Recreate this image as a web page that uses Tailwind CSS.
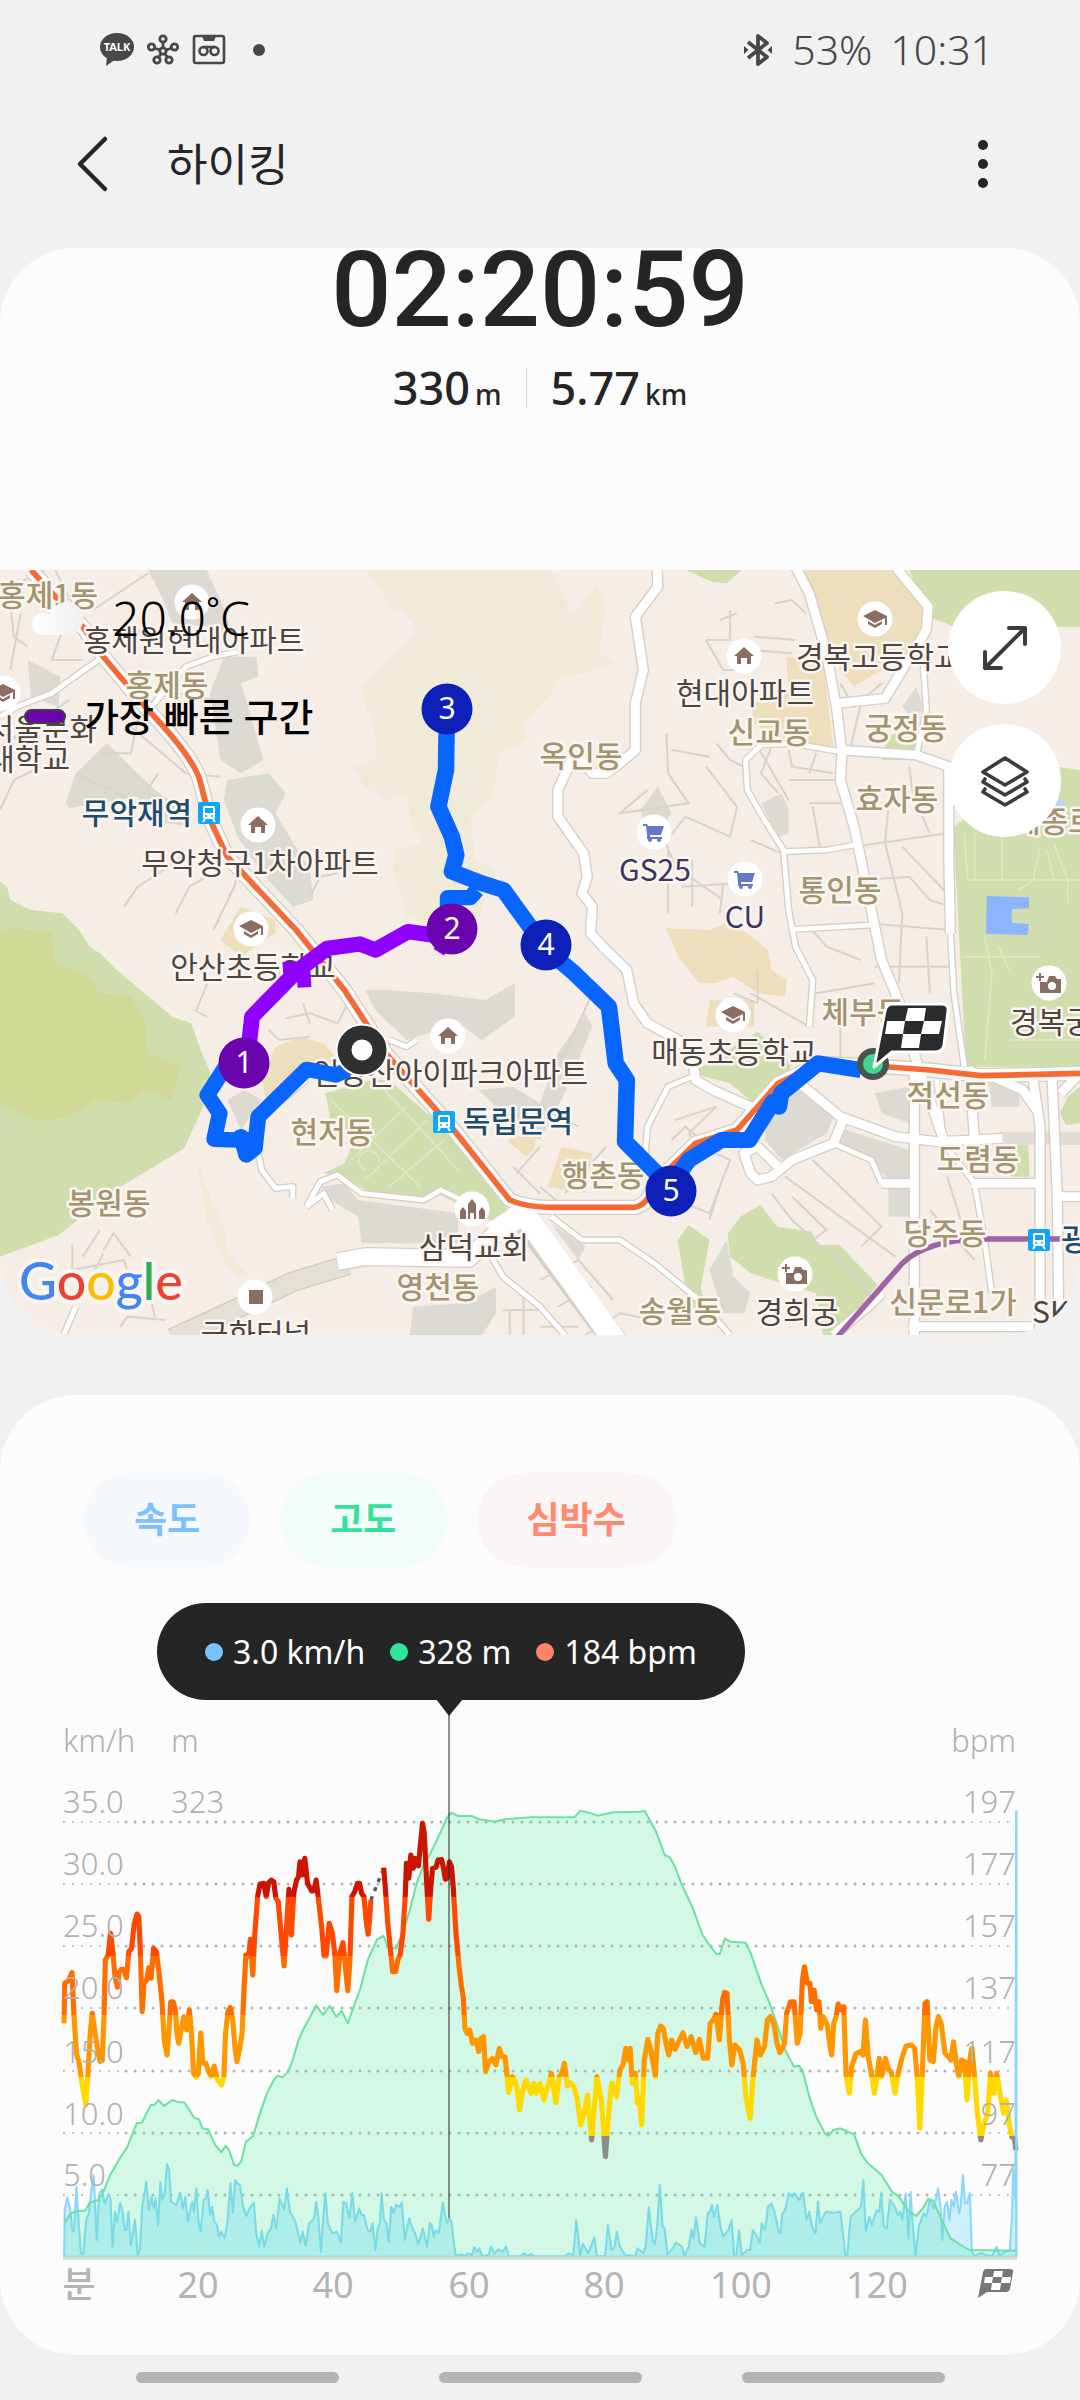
<!DOCTYPE html>
<html lang="ko">
<head>
    <meta charset="utf-8">
    <meta name="viewport" content="width=device-width, initial-scale=1.0">
    <title>하이킹</title>
    <script src="https://cdn.jsdelivr.net/npm/@tailwindcss/browser@4"></script>
</head>
<body class="bg-[#f1f1f1] text-[#252525] font-['Noto_Sans','Noto_Sans_CJK_KR',sans-serif]">

    <!-- status bar -->
    <div class="flex items-center justify-between h-[100px] pl-[99px] pr-[86px] text-[#484848]">
        <div class="flex items-center">
            <svg class="w-[36px] h-[36px]" viewBox="0 0 36 36">
                <ellipse cx="18" cy="15" rx="17" ry="14" fill="#484848"/>
                <path d="M8 25 L7 34 L17 27z" fill="#484848"/>
                <text x="18" y="19" text-anchor="middle" class="fill-white text-[11px] font-bold">TALK</text>
            </svg>
            <svg class="w-[32px] h-[32px] ml-[12px]" viewBox="0 0 32 32" fill="none" stroke="#484848" stroke-width="2.8">
                <path d="M16 9v5M7 14l6 2M25 14l-6 2M11 24l3-4M21 24l-3-4"/>
                <circle cx="16" cy="5" r="3.2"/><circle cx="4.500" cy="13" r="3.2"/><circle cx="27.500" cy="13" r="3.2"/>
                <circle cx="10" cy="26" r="3.2"/><circle cx="22" cy="26" r="3.2"/><circle cx="16" cy="17" r="3.2"/>
            </svg>
            <svg class="w-[34px] h-[32px] ml-[13px]" viewBox="0 0 34 32" fill="none" stroke="#484848" stroke-width="2.6">
                <rect x="2" y="2" width="30" height="27" rx="2"/>
                <path d="M10 2h14l-2 5H12z" fill="#484848" stroke="none"/>
                <circle cx="11.500" cy="17" r="4"/><circle cx="22.500" cy="17" r="4"/>
                <path d="M11 13h12"/>
            </svg>
            <span class="size-[12px] ml-[27px] rounded-full bg-[#484848]"></span>
        </div>
        <div class="flex items-center text-[41px] font-light">
            <svg class="w-[28px] h-[34px] mr-[20px]" viewBox="0 0 28 34" fill="none" stroke="#484848" stroke-width="3.8" stroke-linejoin="round">
                <path d="M4 9 L23 24 L14 31 V3 L23 10 L4 25"/>
                <path d="M0 13l4.500 4l-4.500 4zM28 13l-4.500 4l4.500 4z" fill="#484848" stroke="none"/>
            </svg>
            <span class="mr-[18px]">53%</span>
            <span>10:31</span>
        </div>
    </div>

    <!-- title bar -->
    <header class="flex items-center h-[148px] pl-[74px] pr-[77px] pb-[20px]">
        <button aria-label="뒤로" class="w-[36px]">
            <svg class="w-[36px] h-[58px]" viewBox="0 0 36 58" fill="none" stroke="#252525" stroke-width="4.5" stroke-linecap="round" stroke-linejoin="round"><path d="M31 4 L6 29 L31 54"/></svg>
        </button>
        <h1 class="ml-[57px] text-[44px] leading-none">하이킹</h1>
        <button aria-label="더보기" class="ml-auto flex flex-col items-center gap-[9px] w-[40px]">
            <span class="size-[10px] rounded-full bg-[#252525]"></span>
            <span class="size-[10px] rounded-full bg-[#252525]"></span>
            <span class="size-[10px] rounded-full bg-[#252525]"></span>
        </button>
    </header>

    <!-- summary + map -->
    <section class="bg-[#fcfcfc] rounded-[75px] overflow-hidden">
        <div class="h-[322px]">
            <div class="flex justify-center h-[84px] items-center font-['Roboto',sans-serif] font-medium text-[106px] leading-[72px]">02:20:59</div>
            <div class="flex justify-center items-center h-[112px]">
                <div class="text-[45px] font-medium">330<span class="text-[28px] ml-[5px]">m</span></div>
                <div class="w-px h-[42px] mx-[24px] bg-[#dcdcdc]"></div>
                <div class="text-[45px] font-medium">5.77<span class="text-[28px] ml-[5px]">km</span></div>
            </div>
        </div>

        <div class="relative">
            <svg class="block w-full" viewBox="0 0 1080 765">
                <!-- land, roads and route -->
                <svg x="0" y="0" width="1080" height="765" viewBox="0 30 3136 2295" preserveAspectRatio="none" fill="none">
                    <rect y="30" width="3136" height="2295" fill="#f6ede7"/>
                    <g fill="#efebd8">
                        <path d="M1060 30 1110 90 1120 140 1175 160 1210 210 1170 260 1110 310 1045 385 1060 430 1090 520 1095 590 1025 625 1060 680 1120 720 1185 710 1190 790 1225 850 1145 870 1140 940 1160 990 1180 1070 1240 1090 1390 1080 1440 930 1380 900 1365 780 1430 710 1450 580 1530 540 1520 490 1600 400 1620 355 1700 340 1790 310 1740 280 1760 140 1730 75 1680 150 1655 150 1600 30z"/>
                        <path d="M572 1820 600 1980 640 2080 660 2120 690 2150 725 2150 690 2110 655 2050 650 1985 620 1940 580 1820z"/>
                    </g>
                    <g fill="#cfdeac">
                        <path d="M0 965 20 980 30 1020 90 1050 180 1060 230 1110 260 1160 290 1180 350 1240 500 1370 555 1390 590 1490 612 1540 590 1640 535 1765 350 1880 170 2025 0 2090z"/>
                        <path d="M1993 30H2153L2110 70 2065 65z"/>
                        <path d="M2640 30H3136V200H2770L2700 170z"/>
                        <path d="M2768 800 3000 640 3070 620 3136 630V1520H2805z"/>
                        <path d="M945 1600 1080 1560 1130 1560 1240 1660 1330 1730 1475 1950 1440 1990 1270 1900 1220 1920 1070 1895 1000 1850 940 1840 1000 1810 1030 1740 960 1680z"/>
                        <path d="M2113 2020 2150 1970 2208 1935 2258 2000 2358 2015 2373 2055 2438 2055 2548 2175 2428 2325H2390L2370 2200 2270 2170 2180 2140 2120 2090z"/>
                        <path d="M1968 2040 2000 1995 2060 2040 2035 2180 2050 2260 2000 2240z"/>
                        <path d="M2010 1540 2200 1415 2300 1510 2260 1600 2200 1640 2120 1570z"/>
                        <path d="M3136 1580 3100 1610 3078 1660 3095 1695 3136 1690zM2890 1750H2985L2990 1850H2940L2890 1800zM2580 530 2640 500 2680 600 2560 600z"/>
                    </g>
                    <path d="M0 1120 40 1105 150 1120 160 1210 250 1245 290 1300 380 1310 420 1380 430 1480 525 1520 495 1620 420 1590 370 1630 280 1620 200 1670 110 1685 0 1630z" fill="#d0d996"/>
                    <g fill="#eedfbc">
                        <path d="M2338 30H2590L2690 150 2680 240 2590 310 2480 380 2440 330 2400 240z"/>
                        <path d="M2283 290 2390 310 2420 560 2360 555 2280 550 2190 490 2180 430 2290 400z"/>
                        <path d="M1933 1105 2060 1110 2110 1090 2170 1120 2230 1170 2240 1230 2285 1260 2280 1310 2200 1300 2130 1250 2080 1270 2030 1270 1970 1190z"/>
                        <path d="M640 1140 700 1040 800 1080 800 1120 700 1190zM760 1560 800 1460 870 1430 940 1450 980 1500 970 1530 890 1530 780 1650zM2060 1320H2190V1400H2050zM1630 1760 1720 1780 1700 1900 1590 1880zM1470 1740 1560 1710 1550 1770 1530 1790z"/>
                    </g>
                    <g fill="#dddad4">
                        <path d="M430 30H600L640 120 680 230 620 200 500 190 470 110z"/>
                        <path d="M650 290H745L750 350 700 370 765 600 700 640 640 600 610 400z"/>
                        <path d="M660 660 780 640 830 700 800 760 900 930 910 1020 850 1040 760 940 690 830 650 720z"/>
                        <path d="M190 730 220 640 310 550 450 690 520 740 560 800 480 790 400 710 200 745zM80 300 175 350 170 440 90 410z"/>
                        <path d="M1060 1290 1120 1290 1260 1300 1410 1320 1495 1270 1495 1370 1400 1440 1330 1390 1180 1440 1090 1350z"/>
                        <path d="M1390 1590 1490 1580 1568 1630 1620 1480 1700 1360 1720 1400 1640 1600 1568 1740 1500 1700z"/>
                        <path d="M930 1880 1000 1870 1040 1920 1330 1960V2050H1050L1040 1970 960 1920z"/>
                        <path d="M1200 2240 1350 2230 1440 2180V2260L1400 2325H1190zM660 1620 710 1590 760 1620 700 1710z"/>
                        <path d="M2228 1680 2300 1580 2430 1650 2400 1720 2270 1800 2220 1740z"/>
                        <path d="M2430 1700 2640 1770V1860L2580 1860 2520 1790 2440 1760zM2540 1600 2640 1580V1690L2560 1660z"/>
                        <path d="M2060 2130 2110 2040 2130 2150 2180 2200 2160 2260 2100 2260zM2580 1880H2640V1970H2580zM1600 1990 1700 2060 1680 2100z"/>
                        <path d="M2210 730 2270 700 2290 750V820L2260 830zM1860 750 1910 680 1950 760 1930 790 1870 790zM2620 440 2660 380 2680 440 2660 490zM2870 1570H2960V1640H2880z"/>
                    </g>
                    <path d="M2865 1008 2988 1012V1045L2938 1048V1088L2988 1092 2984 1125 2863 1122z" fill="#8db5ff"/>
                    <path d="M3020 800 3060 720H3088L3100 790z" fill="#bcd4ff"/>

                    <g stroke="#d9d3ca" stroke-width="6">
                        <path d="M130 30 70 60 30 130 40 230 80 260M160 30 210 130 150 300 240 300M30 330 60 160M270 150 400 60 430 40M290 290 380 200 420 230M0 560 60 520 200 420M0 750 40 660 120 620M300 580 380 580 400 480M220 640 400 730 460 640M380 500 540 640 640 650M520 400 620 420 640 500"/>
                        <path d="M360 1040 400 980 490 920 540 880M510 1060 550 980 600 950M620 1110 680 980 700 900M900 1010 930 950 980 940M570 1350 610 1250M565 1350 600 1370M780 1410 810 1440 900 1430M830 1375 900 1360 980 1390 1010 1330M880 1330 900 1390"/>
                        <path d="M240 2090 290 2010M300 2070 330 2020 380 2090M210 2050V2130L360 2100 380 2170M300 2080 260 2160M350 2300 370 2270 480 2280M430 2180 450 2270"/>
                        <path d="M2050 240 2100 330 2180 330M2050 240 2120 240 2120 150M2180 270 2300 280M2190 230 2310 240M2090 180 2140 160M2250 130 2300 120 2340 160M2440 370 2480 440 2560 370M2500 430 2470 560"/>
                        <path d="M1935 520 1940 640 2000 730 1930 740 1800 760 1880 690M1950 570 2060 590M2050 620 2140 740 2120 830 1990 770 1930 850M2080 550 2120 600 2160 620M1930 840 1960 920 2100 1020M1940 870V1060M2010 900V1040M1980 980 2140 970M2100 970 2090 1060M2180 840 2270 880M2200 560 2290 720M2240 560 2210 640 2260 700"/>
                        <path d="M2290 570 2300 620 2420 640M2370 580 2350 640M2290 660H2440M2350 730H2470M2360 740 2380 860M2580 740 2570 850 2620 1060 2610 1270M2640 620 2650 700 2700 820M2480 860 2750 820M2500 960 2640 950 2700 1020 2760 1040M2620 860 2750 1000M2520 1090 2760 1110M2540 1220H2760M2690 1130 2700 1300M2350 1100 2400 1160 2500 1200M2370 1300 2540 1270"/>
                        <path d="M1568 1540 1640 1480 1720 1300M1568 1640 1680 1700M1568 1880 1660 1960M1640 1900 1760 1760M1960 1680 2080 1640 2000 1720 2040 1780M1950 1740 1990 1700 2060 1760M2080 1780 2120 1800 2060 1960 1990 1930M2130 1300 2200 1330V1230M2180 1300 2350 1400M2440 1400V1520M2240 1900 2300 1980 2450 2120 2540 2220M2280 1850 2600 2090M2300 1910 2400 2010 2360 2040M2360 1800 2560 2000 2500 2060M2540 1360 2620 1450M2100 1850 2060 1980"/>
                        <path d="M1568 2160 1680 2100 1780 2220M1620 2240 1720 2180M1700 2325 1800 2260 1900 2280M1568 2300H1680M1480 2250V2325M1460 2250H1568M1520 2200V2325M1500 1840 1568 1760M1490 1820 1568 1900M1240 1690V1760M2750 1850 2790 1980 2830 2000M2700 1950 2830 2100"/>
                    </g>
                    <g stroke="#dfe8c6" stroke-width="5">
                        <path d="M960 1620 1220 1880M1100 1570 1330 1830M1180 1640 1020 1800M1290 1740 1130 1880M1000 1750 1100 1720M1060 1830a30 30 0 1 1 40 -20M1240 1680 1060 1860"/>
                        <path d="M2800 820 2810 960 3136 960M2830 820V960M2910 960V820M2960 990 3000 960 3020 860M3060 850 3100 960V1030M2800 1190H3020M2860 1130 2880 1240 2860 1500M2900 1160 2930 1230M3060 960 3040 870M2930 1400H3136M2930 1440H3136"/>
                    </g>

                    <path d="M500 2335 700 2240 850 2165 1010 2115" stroke="#d3ccbd" stroke-width="62"/>
                    <path d="M500 2335 700 2240 850 2165 1010 2115" stroke="#e5e0d4" stroke-width="54"/>
                    <path d="M2900 1735H3136" stroke="#e3dcd4" stroke-width="40"/>

                    <defs>
                        <g id="wide" stroke-linejoin="round">
                            <path d="M1908 20 1910 80 1845 170 1868 330 1845 430 1845 570 1800 610 1760 640 1720 640 1690 600 1660 600 1620 690 1620 770 1695 880 1705 950 1690 1000 1720 1040 1715 1120 1760 1170 1820 1230 1840 1330 1880 1390 1970 1440 2010 1490 2020 1560 2070 1590 2200 1650"/>
                            <path d="M2310 20 2350 100 2400 280 2430 450 2445 580 2440 660 2480 800 2530 1050 2560 1200 2620 1350 2660 1500 2740 1740"/>
                            <path d="M2600 20 2695 140 2690 210 2570 415 2430 430M2440 570 2660 585 2755 620V900L2760 1120"/>
                            <path d="M2310 1560 2440 1670 2600 1730 2720 1745 2910 1735M2655 1520V2325M3000 1560 3020 1700V2325M3055 1560 3070 1900 3075 2325M2815 1520 2830 1750M2820 1870H3010M2560 1870H2650M3070 1910H3136M2860 1540 2970 1590 3010 1650M3136 1540 3080 1600M2420 2325 2520 2240 2560 2200M2640 2300H3000"/>
                            <path d="M2448 1680 2420 1750 2300 1800 2240 1850 2200 1860 2180 1840 2160 1780 2200 1760 2260 1820"/>
                        </g>
                        <g id="minor" stroke-linejoin="round">
                            <path d="M2440 575 2300 550 2210 555 2165 600 2170 690 2220 780 2275 870 2290 1050 2310 1160 2360 1260 2350 1400M2275 875 2400 870 2480 855M2300 1108 2530 1095M2760 1120 2770 1300 2800 1520M2660 590 2690 450 2680 300"/>
                            <path d="M300 290 230 340 150 400 50 440 0 470M440 440 540 320 620 290 690 275M780 1330 790 1290 830 1290 820 1230"/>
                            <path d="M890 1940 930 1865 980 1845 1050 1900 1230 1920 1280 1890 1340 1920M890 1940 940 1900 965 1950M750 1780 760 1830 800 1885 850 1880V1915M890 1560 830 1610 770 1660M1130 1440 1180 1460 1210 1440M220 2240 185 2325"/>
                            <path d="M1600 1970 1690 2040 1800 2040 1900 2110 2030 2220 2120 2325M1400 2040 1460 2150 1568 2240 1640 2325M2010 1550 1940 1580 1880 1700 1870 1830M2420 1750 2530 1800 2560 1870M2720 1560 2740 1750 2830 1870 2860 2050 2880 2200"/>
                        </g>
                        <path id="trunk" d="M90 30 240 200 300 290 430 450Q560 590 580 660L610 780 660 890 860 1110 1000 1290 1120 1480 1310 1700 1480 1920Q1530 1942 1600 1942H1840Q1880 1940 1900 1870L2020 1750 2140 1710 2260 1570 2380 1510 2540 1518 2700 1530 2848 1547 3136 1540"/>
                    </defs>
                    <use href="#wide" stroke="#d6cfc6" stroke-width="34"/>
                    <use href="#minor" stroke="#d6cfc6" stroke-width="22"/>
                    <use href="#trunk" stroke="#d6cfc6" stroke-width="46"/>
                    <path d="M980 2105 1060 2090 1360 2095 1440 2020 1520 1960" stroke="#d6cfc6" stroke-width="58" stroke-linejoin="round"/>
                    <path d="M980 2105 1060 2090 1360 2095 1440 2020 1520 1960" stroke="#fff" stroke-width="50" stroke-linejoin="round"/>
                    <path d="M1500 1950 1840 2420" stroke="#d6cfc6" stroke-width="74"/>
                    <path d="M1430 2020 1520 1960 1840 2420" stroke="#fff" stroke-width="66"/>
                    <use href="#wide" stroke="#fff" stroke-width="26"/>
                    <use href="#minor" stroke="#fff" stroke-width="14"/>
                    <use href="#trunk" stroke="#fff" stroke-width="38"/>
                    <use href="#trunk" stroke="#f76a36" stroke-width="17"/>
                    <path d="M2428 2335 2620 2110Q2690 2040 2850 2037H3136" stroke="#a063a5" stroke-width="16"/>
                </svg>

                <!-- place names -->
                <g class="font-['Noto_Sans_CJK_KR',sans-serif] text-[30px] fill-[#4d4540]" stroke="#fbf5f1" stroke-width="5" stroke-linejoin="round" paint-order="stroke" text-anchor="middle">
                    <text x="194" y="81">홍제원현대아파트</text>
                    <text x="260" y="304">무악청구1차아파트</text>
                    <text x="97" y="170" text-anchor="end">서울문화</text>
                    <text x="70" y="200" text-anchor="end">대학교</text>
                    <text x="253" y="408">안산초등학교</text>
                    <text x="450" y="514">인왕산아이파크아파트</text>
                    <text x="474" y="688">삼덕교회</text>
                    <text x="256" y="775">금화터널</text>
                    <text x="796" y="98" text-anchor="start">경복고등학교</text>
                    <text x="745" y="134">현대아파트</text>
                    <text x="734" y="493">매동초등학교</text>
                    <text x="1010" y="463" text-anchor="start">경복궁</text>
                    <text x="797" y="753">경희궁</text>
                    <text x="1032" y="753" text-anchor="start">SK</text>
                    <g class="fill-[#3b3560]">
                        <text x="655" y="311">GS25</text>
                        <text x="745" y="358">CU</text>
                    </g>
                    <g class="fill-[#1e4d6b] font-medium">
                        <text x="137" y="254">무악재역</text>
                        <text x="518" y="562">독립문역</text>
                        <text x="1061" y="680" text-anchor="start">광화문</text>
                    </g>
                    <g class="fill-[#a4936f] font-medium">
                        <text x="98" y="36" text-anchor="end">홍제1동</text>
                        <text x="167" y="126">홍제동</text>
                        <text x="332" y="573">현저동</text>
                        <text x="109" y="644">봉원동</text>
                        <text x="438" y="728">영천동</text>
                        <text x="769" y="173">신교동</text>
                        <text x="906" y="169">궁정동</text>
                        <text x="581" y="197">옥인동</text>
                        <text x="897" y="240">효자동</text>
                        <text x="840" y="331">통인동</text>
                        <text x="1013" y="262" text-anchor="start">세종로</text>
                        <text x="863" y="453">체부동</text>
                        <text x="948" y="536">적선동</text>
                        <text x="978" y="600">도렴동</text>
                        <text x="603" y="616">행촌동</text>
                        <text x="945" y="674">당주동</text>
                        <text x="680" y="752">송월동</text>
                        <text x="953" y="743">신문로1가</text>
                    </g>
                </g>
                <path d="M1056 765Q1054 740 1068 738L1080 736" fill="none" stroke="#17508c" stroke-width="5"/>

                <!-- place icons -->
                <defs>
                    <g id="home"><circle r="17.500" fill="#fff"/><path d="M0 -9 L10 0 H7 V8 H3 V2 H-3 V8 H-7 V0 H-10z" fill="#8c6d62"/></g>
                    <g id="school"><circle r="17.500" fill="#fff"/><path d="M0 -9 L12 -3 V6 H10 V-1 L0 4 L-12 -3z M-7 2 L0 6 L7 2 V5 L0 9 L-7 5z" fill="#8c6d62"/></g>
                    <g id="cart"><circle r="17.500" fill="#fff"/><path d="M-11 -8 H-7 L-6 -6 H10 L7 3 H-4 L-4 5 H8 V7 H-7 V3 L-8 -6 H-11z" fill="#6577cc"/><circle cx="-4" cy="8" r="2" fill="#6577cc"/><circle cx="5" cy="8" r="2" fill="#6577cc"/></g>
                    <g id="camera"><circle r="17.500" fill="#fff"/><path d="M-9 -1H-2L0 -7H6L8 -4H12V10H-9z" fill="#8c6d62"/><circle cx="3" cy="3" r="4" fill="#fff"/><path d="M-9 -10V-2M-13 -6H-5" stroke="#8c6d62" stroke-width="2"/></g>
                    <g id="train"><rect x="-11" y="-11" width="22" height="22" rx="2" fill="#0fa7f5"/><rect x="-6" y="-7" width="12" height="13" rx="2" fill="#fff"/><rect x="-4" y="-5" width="8" height="5" fill="#0fa7f5"/><circle cx="-3" cy="3" r="1" fill="#0fa7f5"/><circle cx="3" cy="3" r="1" fill="#0fa7f5"/><path d="M-4 6 L-6 9 M4 6 L6 9" stroke="#fff" stroke-width="2"/></g>
                </defs>
                <use href="#home" x="192" y="32"/><use href="#home" x="258" y="255"/><use href="#home" x="744" y="86"/><use href="#home" x="448" y="466"/>
                <use href="#school" x="3" y="123"/><use href="#school" x="251" y="359"/><use href="#school" x="875" y="49"/><use href="#school" x="733" y="445"/>
                <use href="#cart" x="654" y="262"/><use href="#cart" x="745" y="309"/>
                <use href="#camera" x="1049" y="413"/><use href="#camera" x="795" y="704"/>
                <use href="#train" x="209" y="243"/><use href="#train" x="444" y="552"/><use href="#train" x="1039" y="670"/>
                <circle cx="472" cy="639" r="17.500" fill="#fff"/>
                <path d="M460 649V641L463 637L466 641V649zM468 649V634L472 629L476 634V649H474V643H470V649zM479 649V641L482 637L485 641V649z" fill="#8c6d62"/>
                <circle cx="255" cy="727" r="17.500" fill="#fff"/><rect x="249" y="720" width="14" height="14" fill="#8c6d62"/>

                <!-- track -->
                <svg x="0" y="0" width="1080" height="765" viewBox="0 30 3136 2295" preserveAspectRatio="none" fill="none" stroke-linejoin="round">
                    <path d="M1010 1530 975 1545 890 1528 750 1670 740 1765 715 1785 700 1730 695 1740 622 1738 638 1660 602 1605 680 1480" stroke="#0866ff" stroke-width="46"/>
                    <path d="M690 1720 740 1730 710 1790z" fill="#0866ff" stroke="#0866ff" stroke-width="20"/>
                    <path d="M720 1480 732 1370 860 1235 950 1165 1045 1152 1090 1170 1185 1115 1290 1130" stroke="#9000ff" stroke-width="46"/>
                    <path d="M840 1205 842 1235 882 1240 884 1282" stroke="#9000ff" stroke-width="40"/>
                    <path d="M1270 1150 1300 1170" stroke="#9000ff" stroke-width="40"/>
                    <path d="M1297 500 1295 630 1273 740 1312 830 1325 885 1312 935 1400 970 1462 990 1588 1170 1668 1240 1768 1340 1788 1510 1820 1560 1815 1745 1945 1880 2000 1800 2095 1740H2175L2245 1625 2262 1640 2268 1600 2375 1510 2500 1530" stroke="#0866ff" stroke-width="48"/>
                    <path d="M1385 990 1365 1013 1300 1013 1300 1080" stroke="#0866ff" stroke-width="46"/>
                </svg>
                <g class="text-[30px] fill-white" text-anchor="middle">
                    <circle cx="447" cy="139" r="25.500" fill="#0d21b8"/><text x="447" y="149">3</text>
                    <circle cx="452" cy="359" r="25.500" fill="#6a05ad"/><text x="452" y="369">2</text>
                    <circle cx="546" cy="375" r="25.500" fill="#0d21b8"/><text x="546" y="385">4</text>
                    <circle cx="244" cy="493" r="25.500" fill="#6a05ad"/><text x="244" y="503">1</text>
                    <circle cx="671" cy="621" r="25.500" fill="#0d21b8"/><text x="671" y="631">5</text>
                </g>
                <circle cx="362" cy="480" r="18" fill="#fff" stroke="#fff" stroke-width="17"/>
                <circle cx="362" cy="480" r="17.500" fill="none" stroke="#303030" stroke-width="14"/>
                <circle cx="873" cy="494" r="13" fill="#3fd88c" stroke="#4a5250" stroke-width="6"/>
                <path d="M893 434H941Q949 434 948 441L944 475Q943 482 935 482H892L874 497L885 441Q886 434 893 434z" fill="#2b2b2b" stroke="#fff" stroke-width="3" stroke-linejoin="round"/>
                <path d="M908 438H926L924 451H942L939 464H921L919 478H901L903 464H885L887 451H905zM905 451L903 464H921L924 451z" fill="#fff" fill-rule="evenodd"/>

                <text x="19" y="730" class="font-['Lato',sans-serif] text-[52px] font-medium" stroke="#fbf5f1" stroke-width="8" stroke-linejoin="round" paint-order="stroke"><tspan fill="#4285f4">G</tspan><tspan fill="#ea4335">o</tspan><tspan fill="#fbbc05">o</tspan><tspan fill="#4285f4">g</tspan><tspan fill="#34a853">l</tspan><tspan fill="#ea4335">e</tspan></text>
            </svg>

            <div class="absolute left-0 top-0 pt-[14px] text-black">
                <div class="flex items-center h-[68px] pl-[32px]">
                    <svg class="w-[52px] h-[38px]" viewBox="0 0 52 38">
                        <defs><linearGradient id="cloud"><stop offset="0" stop-color="#fff"/><stop offset="1" stop-color="#f2f0ef"/></linearGradient></defs>
                        <path d="M12 36a11 11 0 1 1 6-20a17 17 0 1 1 22 20z" fill="url(#cloud)"/>
                    </svg>
                    <span class="ml-[28px] text-[48px] font-light">20.0˚C</span>
                </div>
                <div class="flex items-center h-[64px] mt-[32px] pl-[24px]">
                    <span class="w-[42px] h-[15px] rounded-full bg-[#6a05ad] border-2 border-[#463a4a]"></span>
                    <span class="ml-[18px] text-[38px] leading-none font-medium">가장 빠른 구간</span>
                </div>
            </div>

            <div class="absolute right-[19px] top-[21px] flex flex-col gap-[20px]">
                <button aria-label="확대" class="flex items-center justify-center size-[113px] rounded-full bg-white">
                    <svg class="size-[50px]" viewBox="0 0 50 50" fill="none" stroke="#3c3c3c" stroke-width="4" stroke-linecap="round" stroke-linejoin="round"><path d="M5 45L45 5M29 5H45V21M5 29V45H21"/></svg>
                </button>
                <button aria-label="지도 유형" class="flex items-center justify-center size-[113px] rounded-full bg-white">
                    <svg class="size-[52px]" viewBox="0 0 52 52" fill="none" stroke="#3c3c3c" stroke-width="3.600" stroke-linecap="round" stroke-linejoin="round"><path d="M26 3L48 17L26 30L4 17zM6 24L4 27L26 40L48 27L46 24M6 34L4 37L26 50L48 37L46 34"/></svg>
                </button>
            </div>
        </div>
    </section>

    <!-- charts -->
    <section class="mt-[60px] pt-[78px] bg-[#fcfcfc] rounded-[75px]">
        <div class="flex gap-[30px] pl-[84px] text-[36px] font-bold leading-none">
            <button class="h-[94px] px-[50px] rounded-full bg-[#f5f9fd] text-[#7dc2fb]">속도</button>
            <button class="h-[94px] px-[50px] rounded-full bg-[#f2fdf9] text-[#35e29b]">고도</button>
            <button class="h-[94px] px-[50px] rounded-full bg-[#fcf5f5] text-[#ff8a70]">심박수</button>
        </div>

        <div class="flex mt-[36px] pl-[157px]">
            <div class="flex items-center h-[97px] px-[48px] rounded-full bg-[#252525] text-white text-[32px]">
                <span class="size-[18px] mr-[10px] rounded-full bg-[#78c3ff]"></span>3.0 km/h
                <span class="size-[18px] ml-[25px] mr-[10px] rounded-full bg-[#2fe598]"></span>328 m
                <span class="size-[18px] ml-[25px] mr-[10px] rounded-full bg-[#ff836b]"></span>184 bpm
            </div>
        </div>

        <svg class="block w-full" viewBox="0 0 1080 655">
            <g stroke="#b4b4b4" stroke-width="3" stroke-linecap="round" stroke-dasharray="0 9">
                <path d="M126 122H966M126 184H966M126 246H966M126 308H966M126 371H966M126 433H966M126 495H966"/>
                <path d="M64 122H120M64 184H120M64 246H120M64 308H120M64 371H120M64 433H120M64 495H120M972 122H1012M972 184H1012M972 246H1012M972 308H1012M972 371H1012M972 433H1012M972 495H1012" stroke-width="2"/>
            </g>
            <svg x="0" y="0" width="1080" height="610" viewBox="0 0 3136 1830" preserveAspectRatio="none" fill="none" stroke-linejoin="round">
                <defs>
                    <!-- heart rate zones -->
                    <linearGradient id="zones" gradientUnits="userSpaceOnUse" x1="0" y1="590" x2="0" y2="1308">
                        <stop offset="0" stop-color="#cb1500"/><stop offset="0" stop-color="#ff4800"/>
                        <stop offset=".248" stop-color="#ff4800"/><stop offset=".248" stop-color="#ff6f00"/>
                        <stop offset=".494" stop-color="#ff6f00"/><stop offset=".494" stop-color="#ff9800"/>
                        <stop offset=".752" stop-color="#ff9800"/><stop offset=".752" stop-color="#ffda00"/>
                        <stop offset="1" stop-color="#ffda00"/><stop offset="1" stop-color="#8c8c8c"/>
                    </linearGradient>
                </defs>
                <path d="M186 1670 188 1530 195 1492 203 1520 210 1590 215 1595 222 1460 228 1560 235 1660 242 1662 250 1560 258 1540 264 1480 272 1425 281 1620 288 1480 296 1468 304 1510 316 1482 321 1500 327 1640 334 1535 340 1565 349 1508 356 1535 362 1590 367 1590 373 1535 380 1635 392 1560 400 1665 406 1650 413 1520 425 1445 432 1530 440 1490 446 1525 452 1495 459 1575 466 1445 471 1500 478 1485 485 1392 491 1410 497 1505 512 1515 523 1478 531 1525 538 1490 545 1565 558 1505 563 1535 570 1465 577 1570 583 1595 591 1500 598 1495 603 1470 610 1545 616 1520 622 1565 630 1575 636 1610 642 1595 652 1615 660 1570 669 1450 676 1540 683 1440 690 1452 697 1455 706 1520 715 1548 725 1525 737 1508 744 1600 753 1640 760 1592 767 1640 777 1600 787 1585 794 1545 802 1585 812 1495 818 1510 825 1530 833 1465 842 1535 858 1565 872 1628 879 1595 887 1638 898 1570 912 1555 918 1505 924 1550 932 1655 938 1560 945 1480 952 1570 965 1600 978 1595 990 1628 997 1505 1005 1510 1015 1555 1023 1480 1031 1565 1043 1525 1050 1545 1057 1545 1067 1590 1075 1595 1082 1570 1090 1650 1097 1585 1103 1570 1108 1480 1115 1560 1122 1570 1129 1625 1136 1520 1143 1540 1150 1515 1160 1520 1167 1508 1175 1620 1188 1555 1196 1580 1205 1600 1215 1632 1228 1585 1240 1640 1248 1570 1254 1575 1259 1610 1266 1590 1274 1600 1286 1508 1293 1550 1298 1570 1305 1555 1311 1565 1318 1630 1324 1668 1340 1663 1350 1668 1358 1660 1370 1665 1377 1642 1385 1655 1392 1645 1400 1668 1418 1665 1426 1640 1436 1660 1446 1648 1460 1655 1469 1640 1477 1668 1510 1669 1523 1660 1532 1668 1542 1662 1550 1669 1600 1669 1640 1668 1652 1660 1665 1665 1673 1560 1685 1665 1693 1632 1708 1660 1726 1612 1733 1669 1757 1668 1765 1575 1776 1650 1784 1642 1791 1595 1800 1640 1815 1665 1845 1668 1851 1645 1868 1660 1875 1640 1884 1522 1895 1620 1902 1632 1908 1580 1916 1455 1924 1580 1930 1585 1938 1665 1950 1650 1962 1628 1980 1640 1988 1668 2000 1640 2008 1590 2014 1615 2021 1552 2032 1630 2046 1640 2055 1540 2062 1535 2067 1515 2073 1550 2083 1515 2092 1580 2100 1610 2115 1590 2124 1560 2132 1668 2138 1668 2146 1590 2154 1665 2170 1650 2178 1650 2186 1590 2198 1610 2206 1630 2212 1570 2222 1590 2230 1520 2240 1510 2250 1540 2262 1600 2266 1600 2272 1540 2280 1530 2290 1480 2300 1490 2308 1480 2320 1500 2332 1478 2342 1560 2350 1535 2358 1580 2368 1600 2375 1505 2381 1570 2398 1535 2420 1538 2440 1535 2450 1620 2454 1668 2460 1668 2470 1550 2490 1530 2500 1520 2507 1440 2514 1595 2524 1550 2532 1575 2545 1530 2553 1535 2559 1478 2566 1580 2575 1585 2584 1500 2598 1520 2607 1545 2614 1535 2620 1560 2630 1480 2638 1615 2644 1475 2650 1570 2658 1668 2668 1580 2682 1540 2690 1550 2700 1500 2712 1525 2724 1465 2732 1530 2736 1620 2743 1520 2750 1505 2757 1560 2763 1500 2770 1520 2776 1475 2785 1540 2789 1525 2796 1425 2802 1510 2808 1510 2816 1480 2822 1655 2830 1668 2850 1658 2862 1665 2880 1668 2894 1640 2902 1665 2920 1655 2932 1650 2938 1560 2942 1410 2948 1500 2951 333 2951 1670z" fill="#cfeefe" stroke="#8cd6fc" stroke-width="6"/>
                <path d="M188 1670V1568L205 1540 225 1532 248 1532 260 1508 285 1500 300 1475 320 1425 345 1380 370 1340 397 1270 412 1268 438 1215 448 1215 460 1200 476 1218 500 1200 520 1207 535 1207 565 1255 577 1257 588 1285 604 1288 625 1335 643 1357 655 1337 665 1350 680 1395 690 1397 700 1385 714 1325 735 1308 755 1240 775 1180 795 1140 805 1127 820 1132 837 1115 850 1080 867 1020 880 990 905 942 918 916 938 945 957 918 977 950 992 932 1010 970 1025 925 1045 870 1068 780 1095 718 1114 708 1128 745 1150 745 1172 690 1190 630 1210 550 1230 495 1250 460 1280 395 1300 350 1310 338 1330 348 1370 348 1392 358 1437 365 1470 357 1540 352 1668 352 1685 332 1710 338 1735 347 1780 337 1860 335 1872 332 1905 395 1930 465 1945 472 1960 500 1980 555 2010 620 2040 705 2060 735 2080 762 2090 762 2105 715 2120 725 2165 728 2180 760 2210 850 2235 910 2255 970 2280 1050 2305 1100 2320 1097 2330 1110 2350 1190 2370 1250 2395 1300 2405 1307 2420 1290 2440 1285 2480 1303 2500 1360 2520 1390 2560 1425 2590 1475 2610 1490 2640 1535 2660 1548 2680 1525 2695 1497 2710 1502 2730 1550 2760 1615 2790 1635 2815 1650 2951 1652V1670z" fill="#34e98f" fill-opacity=".2"/>
                <path d="M188 1568 205 1540 225 1532 248 1532 260 1508 285 1500 300 1475 320 1425 345 1380 370 1340 397 1270 412 1268 438 1215 448 1215 460 1200 476 1218 500 1200 520 1207 535 1207 565 1255 577 1257 588 1285 604 1288 625 1335 643 1357 655 1337 665 1350 680 1395 690 1397 700 1385 714 1325 735 1308 755 1240 775 1180 795 1140 805 1127 820 1132 837 1115 850 1080 867 1020 880 990 905 942 918 916 938 945 957 918 977 950 992 932 1010 970 1025 925 1045 870 1068 780 1095 718 1114 708 1128 745 1150 745 1172 690 1190 630 1210 550 1230 495 1250 460 1280 395 1300 350 1310 338 1330 348 1370 348 1392 358 1437 365 1470 357 1540 352 1668 352 1685 332 1710 338 1735 347 1780 337 1860 335 1872 332 1905 395 1930 465 1945 472 1960 500 1980 555 2010 620 2040 705 2060 735 2080 762 2090 762 2105 715 2120 725 2165 728 2180 760 2210 850 2235 910 2255 970 2280 1050 2305 1100 2320 1097 2330 1110 2350 1190 2370 1250 2395 1300 2405 1307 2420 1290 2440 1285 2480 1303 2500 1360 2520 1390 2560 1425 2590 1475 2610 1490 2640 1535 2660 1548 2680 1525 2695 1497 2710 1502 2730 1550 2760 1615 2790 1635 2815 1650 2951 1652" stroke="#6be2a3" stroke-width="6"/>
                <g stroke-width="15" stroke="url(#zones)">
                    <path d="M186 970 188 850 200 840 209 818 215 950 222 1060 230 1090 238 1150 249 1215 255 1130 262 1000 268 940 276 1000 284 1050 291 1085 297 1080 302 950 306 780 314 765 321 700 328 760 334 830 341 862 345 820 352 808 360 808 367 833 374 755 382 745 390 670 398 642 403 650 407 740 413 935 418 850 426 840 432 803 439 835 446 745 454 755 463 830 470 900 477 1020 485 1065 490 1000 496 905 503 905 509 930 514 1000 519 1030 526 990 534 950 542 990 550 930 556 1000 562 1120 570 1132 576 1120 583 998 589 1090 598 1090 606 1115 614 1130 622 1098 632 1140 643 1155 650 1130 655 1000 662 935 669 922 676 960 682 1040 688 1085 695 1050 703 1000 709 860 714 765 722 770 727 718 734 825 740 700 748 590 755 552 766 550 773 590 780 548 788 540 795 545 801 595 808 605 816 700 825 798 832 680 839 568 846 705 853 580 861 540 867 530 871 485 878 525 885 475 893 550 905 573 911 572 918 540 926 610 934 680 941 768 947 768 956 670 965 700 972 760 978 872 987 760 996 728 1003 800 1010 872 1016 780 1022 590 1030 575 1038 550 1044 550 1050 580 1057 590 1063 660 1069 703 1073 660 1077 600"/>
                    <path d="M1077 600 1110 515" stroke="#555" stroke-width="10" stroke-dasharray="12 17"/>
                    <path d="M1114 503 1120 580 1126 670 1132 730 1140 815 1149 815 1155 780 1162 765 1170 700 1177 580 1180 490 1187 535 1193 465 1200 505 1206 475 1215 498 1221 430 1227 370 1232 400 1238 530 1245 658 1251 560 1256 505 1266 502 1272 480 1282 478 1287 500 1293 538 1298 535 1305 485 1311 500 1316 560 1324 700 1333 800 1340 860 1345 890 1350 985 1356 1000 1364 990 1372 1030 1382 1020 1390 1055 1397 1015 1404 1010 1410 1115 1420 1085 1430 1075 1440 1095 1450 1045 1457 1070 1466 1070 1471 1110 1477 1178 1488 1130 1495 1140 1502 1170 1509 1230 1516 1180 1527 1140 1535 1160 1542 1180 1550 1150 1558 1180 1568 1150 1580 1200 1590 1160 1601 1120 1614 1208 1624 1130 1632 1120 1639 1090 1647 1158 1656 1148 1666 1160 1676 1195 1686 1275 1696 1240 1706 1185 1718 1320 1726 1220 1733 1130 1746 1200 1758 1370 1768 1230 1776 1150 1790 1190 1800 1110 1809 1095 1817 1045 1824 1080 1830 1045 1836 1150 1845 1120 1851 1210 1856 1190 1863 1275 1871 1080 1881 1018 1890 1050 1903 1130 1910 1000 1918 978 1926 985 1934 1030 1942 1065 1950 1020 1960 1048 1973 1020 1983 998 1995 1040 2007 1010 2020 1058 2031 1018 2042 1075 2055 1075 2062 970 2071 960 2079 943 2089 1020 2098 900 2104 877 2111 880 2118 1020 2125 1095 2134 1035 2148 1050 2158 1090 2166 1190 2178 1255 2186 1140 2198 1020 2208 1065 2220 1040 2228 960 2237 950 2248 975 2256 1030 2265 1058 2278 1030 2284 940 2296 905 2306 905 2315 1030 2323 1000 2330 840 2336 800 2344 850 2352 850 2356 905 2364 870 2371 930 2378 905 2383 985 2390 950 2402 975 2409 1030 2415 1065 2421 970 2428 950 2434 912 2442 930 2450 920 2457 1130 2466 1180 2473 1100 2486 1060 2498 1055 2506 1065 2513 960 2521 1070 2530 1120 2539 1180 2548 1120 2553 1075 2560 1130 2571 1075 2580 1110 2588 1115 2599 1180 2608 1120 2620 1070 2631 1038 2646 1035 2656 1045 2663 1130 2671 1285 2678 1120 2686 910 2692 905 2700 1080 2710 1085 2718 980 2725 950 2733 970 2744 1060 2754 1070 2761 1080 2769 1025 2776 1085 2784 1130 2792 1080 2801 1085 2808 1200 2816 1080 2822 1045 2830 1130 2838 1240 2848 1320 2858 1270 2868 1240 2876 1120 2886 1180 2894 1120 2904 1180 2914 1240 2922 1200 2930 1270 2938 1310 2946 1318 2950 1350"/>
                </g>
                <path d="M2951 333V1670" stroke="#8cd6fc" stroke-width="6"/>
            </svg>
            <path d="M63 558H1017" stroke="#d4d8d6" stroke-width="3"/>
            <path d="M449 10V518" stroke="#252525" stroke-width="1"/>
            <path d="M436 -1H463L449 16z" fill="#252525"/>

            <g class="fill-[#b0b0b0] text-[31px] font-light">
                <text x="63" y="52">km/h</text><text x="171" y="52">m</text><text x="171" y="113">323</text>
                <text x="63" y="113">35.0</text><text x="63" y="175">30.0</text><text x="63" y="237">25.0</text><text x="63" y="299">20.0</text>
                <text x="63" y="363">15.0</text><text x="63" y="425">10.0</text><text x="63" y="486">5.0</text>
                <g text-anchor="end">
                    <text x="1016" y="52">bpm</text>
                    <text x="1016" y="113">197</text><text x="1016" y="175">177</text><text x="1016" y="237">157</text><text x="1016" y="299">137</text>
                    <text x="1016" y="363">117</text><text x="1016" y="425">97</text><text x="1016" y="486">77</text>
                </g>
            </g>
            <g class="fill-[#b4b4b4] text-[36px]" text-anchor="middle">
                <text x="79" y="598" class="font-medium">분</text>
                <text x="198" y="598">20</text><text x="333" y="598">40</text><text x="469" y="598">60</text>
                <text x="604" y="598">80</text><text x="741" y="598">100</text><text x="877" y="598">120</text>
            </g>
            <path d="M986 569H1010Q1014 569 1013 572L1010 589Q1009 592 1006 592H987L978 598L983 572Q984 569 986 569z" fill="#777"/>
            <path d="M994 571H1003L1002 577H1011L1010 583H1001L1000 590H991L992 583H984L985 577H993zM993 577L992 583H1001L1002 577z" fill="#fff" fill-rule="evenodd"/>
        </svg>
    </section>

    <!-- navigation hints -->
    <nav class="flex justify-center gap-[100px] pt-[17px] pb-[16px]">
        <span class="w-[203px] h-[11px] rounded-full bg-[#b4b4b4]"></span>
        <span class="w-[203px] h-[11px] rounded-full bg-[#b4b4b4]"></span>
        <span class="w-[203px] h-[11px] rounded-full bg-[#b4b4b4]"></span>
    </nav>

</body>
</html>
